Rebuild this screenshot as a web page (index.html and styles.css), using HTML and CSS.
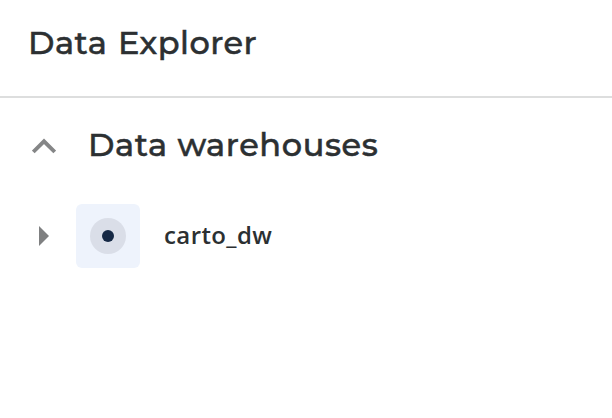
FILE: index.html
```html
<!DOCTYPE html>
<html lang="en">
<head>
<meta charset="utf-8">
<title>Data Explorer</title>
<link rel="stylesheet" href="styles.css">
</head>
<body>
<header class="header"><h1 class="title">Data Explorer</h1></header>
<main>
<section class="section">
<svg class="chevron" viewBox="0 0 24 16"><path d="M1.3 14 12 3.300 22.700 14" fill="none" stroke="#858687" stroke-width="3.8"/></svg>
<h2 class="subtitle">Data warehouses</h2>
</section>
<div class="row">
<svg class="caret" viewBox="0 0 10 20"><path d="M0 0 10 10 0 20Z" fill="#7f8081"/></svg>
<div class="tile"><svg class="logo" viewBox="0 0 36 36"><circle cx="18" cy="18" r="18" fill="#dadee8"/><circle cx="18" cy="18" r="6" fill="#162945"/></svg></div>
<span class="name">carto_dw</span>
</div>
</main>
</body>
</html>
```
FILE: styles.css
```css
* { box-sizing: border-box; }
body { margin: 0; background: #fff; color: #2c3032; font-family: Montserrat, "Open Sans", sans-serif; }
h1, h2 { margin: 0; font-weight: 500; line-height: 40px; white-space: nowrap; -webkit-text-stroke: 0.5px #2c3032; }
.header { height: 98px; padding: 23px 28px 0; border-bottom: 2px solid #dddede; }
.title { font-size: 32px; letter-spacing: 0.5px; word-spacing: 1.5px; }
.section { display: flex; align-items: center; height: 94px; padding-left: 32px; }
.chevron { width: 24px; height: 16px; margin: 2px 32px 0 0; }
.subtitle { font-size: 32px; letter-spacing: 0.6px; word-spacing: 0.5px; }
.row { display: flex; align-items: center; height: 64px; margin-top: 12px; padding-left: 39px; }
.caret { width: 10px; height: 20px; margin-right: 27px; }
.tile { display: grid; place-items: center; width: 64px; height: 64px; border-radius: 6px; background: #eef3fc; margin-right: 24px; }
.logo { width: 36px; height: 36px; }
.name { font: 600 24px/36px "Open Sans", sans-serif; letter-spacing: 0.4px; margin-top: -2px; }
```
